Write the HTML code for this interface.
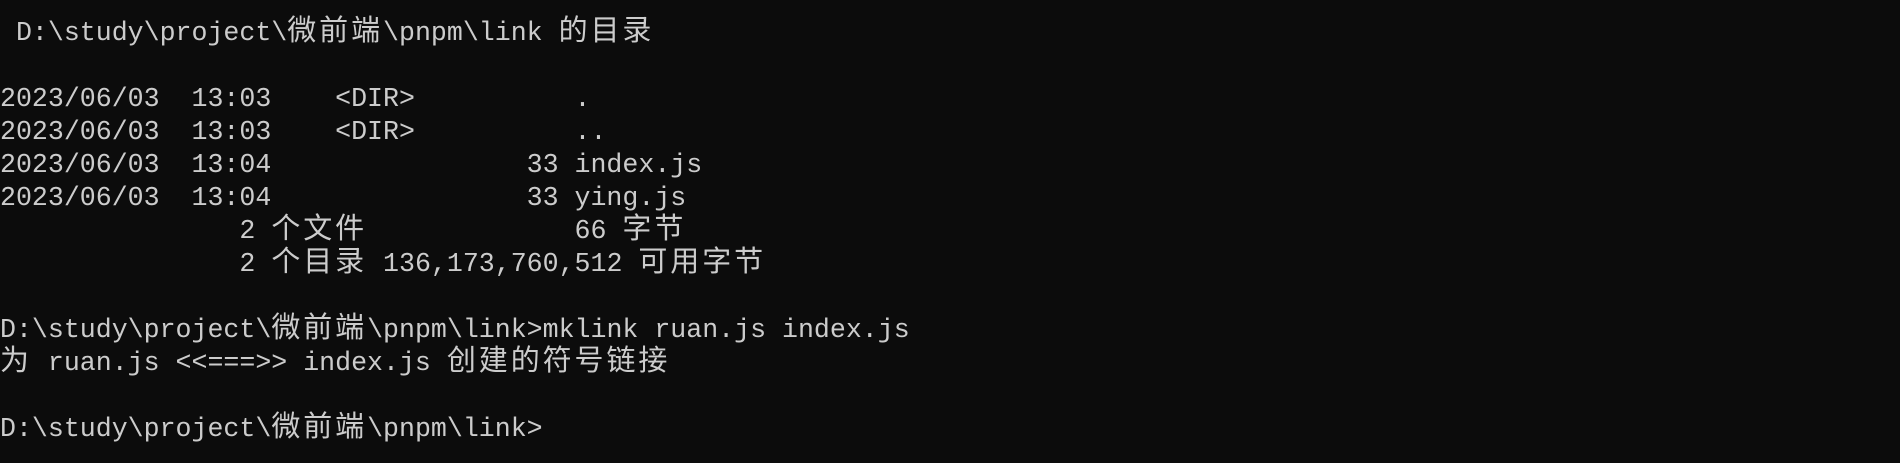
<!DOCTYPE html>
<html><head><meta charset="utf-8"><style>
html,body{margin:0;padding:0;background:#0c0c0c;width:1900px;height:463px;overflow:hidden}
pre{margin:0;padding:17px 0 0 0;font-family:"Liberation Mono","Noto Sans CJK SC",monospace;font-size:26.6px;line-height:33px;color:#cccccc;white-space:pre}
.c{font-family:"Noto Sans CJK SC",sans-serif;font-size:29px;letter-spacing:2.92px;line-height:0;font-weight:400}
</style></head><body><pre> D:\study\project\<span class="c">微前端</span>\pnpm\link <span class="c">的目录</span>

2023/06/03  13:03    &lt;DIR&gt;          .
2023/06/03  13:03    &lt;DIR&gt;          ..
2023/06/03  13:04                33 index.js
2023/06/03  13:04                33 ying.js
               2 <span class="c">个文件</span>             66 <span class="c">字节</span>
               2 <span class="c">个目录</span> 136,173,760,512 <span class="c">可用字节</span>

D:\study\project\<span class="c">微前端</span>\pnpm\link&gt;mklink ruan.js index.js
<span class="c">为</span> ruan.js &lt;&lt;===&gt;&gt; index.js <span class="c">创建的符号链接</span>

D:\study\project\<span class="c">微前端</span>\pnpm\link&gt;</pre></body></html>
